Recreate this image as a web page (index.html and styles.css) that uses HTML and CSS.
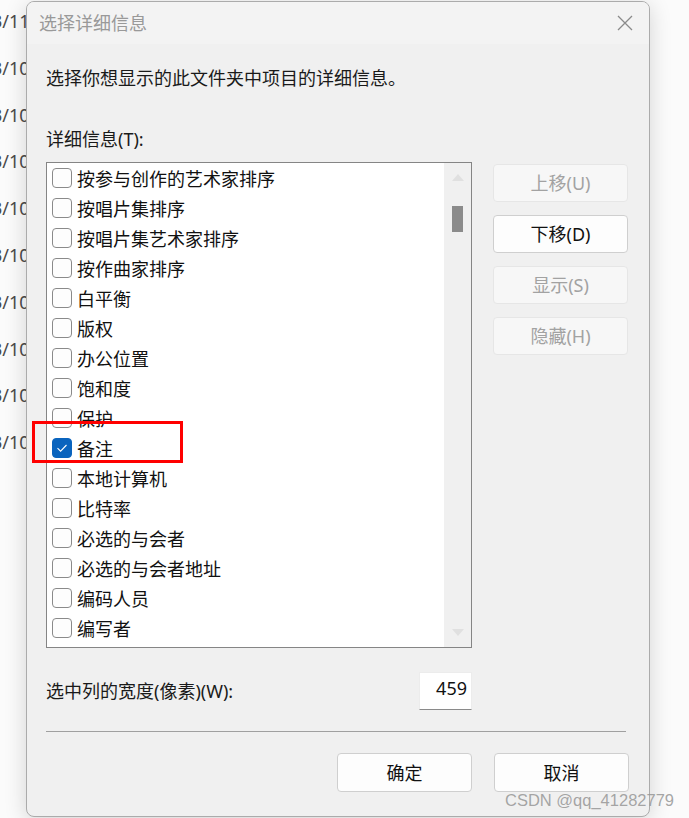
FILE: index.html
```html
<!DOCTYPE html>
<html lang="zh-CN">
<head>
<meta charset="utf-8">
<title>选择详细信息</title>
<link rel="stylesheet" href="styles.css">
</head>
<body>
<div class="screen">
  <div class="backdrop">
    <div class="bd-line">3/11</div>
    <div class="bd-line">3/10</div>
    <div class="bd-line">3/10</div>
    <div class="bd-line">3/10</div>
    <div class="bd-line">3/10</div>
    <div class="bd-line">3/10</div>
    <div class="bd-line">3/10</div>
    <div class="bd-line">3/10</div>
    <div class="bd-line">3/10</div>
    <div class="bd-line">3/10</div>
  </div>
  <div class="dialog">
    <div class="titlebar">
      <span class="title">选择详细信息</span>
      <svg class="close" width="16" height="16" viewBox="0 0 16 16"><path d="M1 1 L15 15 M15 1 L1 15" stroke="#8a8a8a" stroke-width="1.3" fill="none"/></svg>
    </div>
    <div class="body">
      <p class="desc">选择你想显示的此文件夹中项目的详细信息。</p>
      <p class="label">详细信息(T):</p>
      <div class="main">
        <div class="listbox">
          <ul class="items">
            <li><span class="cb"></span>按参与创作的艺术家排序</li>
            <li><span class="cb"></span>按唱片集排序</li>
            <li><span class="cb"></span>按唱片集艺术家排序</li>
            <li><span class="cb"></span>按作曲家排序</li>
            <li><span class="cb"></span>白平衡</li>
            <li><span class="cb"></span>版权</li>
            <li><span class="cb"></span>办公位置</li>
            <li><span class="cb"></span>饱和度</li>
            <li><span class="cb"></span>保护</li>
            <li><span class="cb checked"><svg width="20" height="20" viewBox="0 0 20 20"><path d="M5.5 10.2 L8.6 13.2 L14.5 7" stroke="#fff" stroke-width="1.1" fill="none"/></svg></span>备注</li>
            <li><span class="cb"></span>本地计算机</li>
            <li><span class="cb"></span>比特率</li>
            <li><span class="cb"></span>必选的与会者</li>
            <li><span class="cb"></span>必选的与会者地址</li>
            <li><span class="cb"></span>编码人员</li>
            <li><span class="cb"></span>编写者</li>
          </ul>
          <div class="scrollbar">
            <span class="arrow up"></span>
            <span class="track"><span class="thumb"></span></span>
            <span class="arrow down"></span>
          </div>
        </div>
        <div class="side-buttons">
          <button class="btn disabled">上移(U)</button>
          <button class="btn">下移(D)</button>
          <button class="btn disabled">显示(S)</button>
          <button class="btn disabled">隐藏(H)</button>
        </div>
      </div>
      <div class="width-row">
        <span class="width-label">选中列的宽度(像素)(W):</span>
        <div class="num-input">459</div>
      </div>
      <div class="sep"></div>
      <div class="footer">
        <button class="btn">确定</button>
        <button class="btn">取消</button>
      </div>
    </div>
  </div>
  <div class="annotation"></div>
  <div class="watermark">CSDN @qq_41282779</div>
</div>
</body>
</html>
```
FILE: styles.css
```css
* { box-sizing: border-box; }
html, body { margin: 0; padding: 0; }
body {
  background: #ffffff;
  font-family: "Noto Sans", "Noto Sans CJK SC", sans-serif;
  color: #1a1a1a;
}
.screen {
  position: relative;
  width: 689px;
  height: 818px;
  overflow: hidden;
  display: flex;
  background: #fbfbfb;
}
.backdrop {
  width: 26px;
  flex: none;
  overflow: hidden;
  margin-top: -2px;
}
.bd-line {
  height: 46.8px;
  line-height: 46.8px;
  font-size: 18px;
  color: #4a4a4a;
  white-space: nowrap;
  margin-left: -8px;
}
.dialog {
  flex: none;
  width: 624px;
  height: 816px;
  margin-top: 1px;
  border: 1px solid #ababab;
  border-radius: 8px;
  background: #f0f0f0;
  box-shadow: 0 4px 22px rgba(0, 0, 0, 0.16);
  overflow: hidden;
  display: flex;
  flex-direction: column;
  position: relative;
  z-index: 1;
}
.titlebar {
  height: 42px;
  flex: none;
  background: #f3f3f3;
  display: flex;
  align-items: center;
  justify-content: space-between;
  padding: 0 16px 0 12px;
}
.title {
  font-size: 18px;
  color: #999999;
  line-height: 24px;
  margin-top: -1px;
}
.close { display: block; margin-top: -1px; }
.body {
  padding: 0 20px 0 19px;
  display: flex;
  flex-direction: column;
}
.desc, .label {
  margin: 0;
  font-size: 18px;
  line-height: 24px;
}
.desc { margin-top: 22px; }
.label { margin-top: 37px; }
.main {
  display: flex;
  margin-top: 11px;
  gap: 21px;
}
.listbox {
  width: 426px;
  height: 486px;
  border: 1px solid #858585;
  background: #ffffff;
  display: flex;
  overflow: hidden;
}
.items {
  list-style: none;
  margin: 0;
  padding: 0 0 0 5px;
  flex: 1;
  overflow: hidden;
}
.items li {
  height: 30px;
  display: flex;
  align-items: center;
  gap: 5px;
  font-size: 18px;
  white-space: nowrap;
  color: #111;
}
.cb {
  width: 20px;
  height: 20px;
  flex: none;
  border: 1px solid #8a8a8a;
  border-radius: 4px;
  background: #fdfdfd;
  display: block;
}
.cb.checked {
  background: #0a64be;
  border-color: #0a64be;
}
.cb.checked svg { display: block; margin: -1px; }
.scrollbar {
  width: 27px;
  flex: none;
  background: #f0f0f0;
  display: flex;
  flex-direction: column;
  align-items: center;
}
.arrow {
  width: 0;
  height: 0;
  border-left: 6px solid transparent;
  border-right: 6px solid transparent;
  flex: none;
}
.arrow.up {
  border-bottom: 7px solid #e0e0e0;
  margin-top: 11px;
}
.arrow.down {
  border-top: 7px solid #e0e0e0;
  margin-bottom: 11px;
}
.track {
  flex: 1;
  display: block;
  width: 100%;
  padding-top: 25px;
}
.thumb {
  display: block;
  width: 11px;
  height: 26px;
  background: #8b8b8b;
  margin-left: 8px;
}
.side-buttons {
  display: flex;
  flex-direction: column;
  gap: 13px;
  padding-top: 2px;
}
.btn {
  width: 135px;
  height: 38px;
  border: 1px solid #cfcfcf;
  border-radius: 4px;
  background: #fdfdfd;
  font-family: "Noto Sans", "Noto Sans CJK SC", sans-serif;
  font-size: 18px;
  color: #111;
  padding: 0;
  line-height: 24px;
}
.btn.disabled {
  background: #f7f7f7;
  border-color: #e6e6e6;
  color: #a2a2a2;
}
.width-row {
  width: 426px;
  margin-top: 24px;
  display: flex;
  justify-content: space-between;
  align-items: center;
}
.width-label {
  font-size: 18px;
  line-height: 24px;
}
.num-input {
  width: 53px;
  height: 38px;
  background: #ffffff;
  border: 1px solid #ececec;
  border-bottom: 1px solid #8a8a8a;
  font-size: 18px;
  line-height: 30px;
  text-align: right;
  padding-right: 4px;
  color: #111;
}
.sep {
  width: 580px;
  height: 1px;
  background: #a0a0a0;
  margin-top: 21px;
}
.footer {
  margin-top: 21px;
  display: flex;
  justify-content: flex-end;
  gap: 22px;
}
.footer .btn { height: 39px; }
.annotation {
  position: absolute;
  left: 32px;
  top: 421px;
  width: 151px;
  height: 42px;
  border: 3px solid #ff0000;
  z-index: 2;
}
.watermark {
  position: absolute;
  left: 505px;
  top: 790px;
  font-family: "Liberation Sans", Arial, sans-serif;
  font-size: 16.5px;
  line-height: 20px;
  color: rgba(150, 150, 150, 0.85);
  z-index: 3;
  white-space: nowrap;
}
```
